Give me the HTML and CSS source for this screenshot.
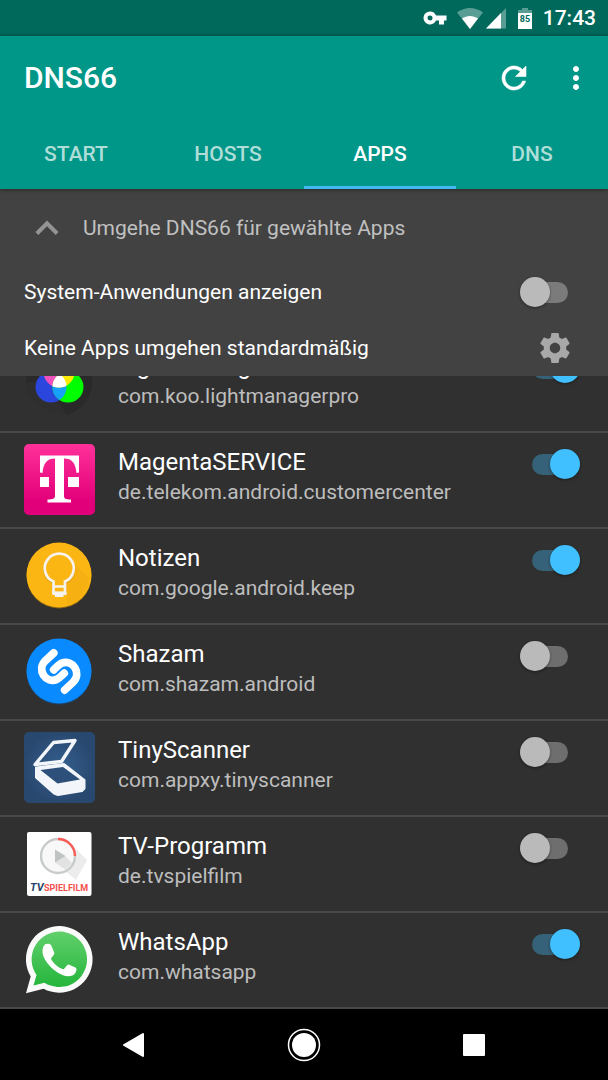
FILE: index.html
```html
<!DOCTYPE html>
<html lang="de" dir="ltr">
  <head>
    <meta charset="utf-8">
    <meta name="viewport" content="width=device-width, initial-scale=1">
    <title>DNS66</title>
    <link rel="stylesheet" href="styles.css">
  </head>
  <body>
    <div class="statusbar">
      <svg class="key" viewBox="0 0 24 14"><path fill="#fff" fill-rule="evenodd" d="M7 0.5a6.5 6.5 0 1 0 6 9H16V13.500h5V9.500h2.500V4.500H13A6.500 6.500 0 0 0 7 .5zM7 4.500a2.500 2.500 0 1 1 0 5 2.500 2.500 0 0 1 0-5z"/></svg>
      <svg class="wifi" viewBox="0 0 26 21"><path fill="#fff" fill-opacity=".35" d="M0 4.500C8-1.500 18-1.500 26 4.500L13 21z"/><path fill="#fff" d="M5 10.500C10 7 16 7 21 10.500L13 21z"/></svg>
      <svg class="signal" viewBox="0 0 20 21"><path fill="#fff" fill-opacity=".35" d="M20 0v20.500H0z"/><path fill="#fff" d="M15 5v15.500H0z"/></svg>
      <svg class="battery" viewBox="0 0 14 21"><path fill="#fff" fill-opacity=".35" d="M4 0h6v2h4v4H0V2h4z"/><path fill="#fff" d="M0 5h14v16H0z"/><text x="7" y="14" text-anchor="middle">85</text></svg>
      <span class="clock">17:43</span>
    </div>

    <header class="header">
      <div class="toolbar">
        <h1>DNS66</h1>
        <button class="action" aria-label="Aktualisieren">
          <svg width="36" height="36" viewBox="0 0 24 24"><path fill="#fff" stroke="#fff" stroke-width=".4" d="M17.650 6.350C16.200 4.900 14.210 4 12 4c-4.420 0-7.990 3.580-7.990 8s3.570 8 7.990 8c3.730 0 6.840-2.550 7.730-6h-2.080c-.82 2.330-3.040 4-5.650 4-3.310 0-6-2.690-6-6s2.690-6 6-6c1.660 0 3.140.69 4.220 1.780L13 11h7V4l-2.350 2.350z"/></svg>
        </button>
        <button class="action" aria-label="Menü">
          <svg width="36" height="36" viewBox="0 0 24 24"><path fill="#fff" d="M12 8c1.100 0 2-.9 2-2s-.9-2-2-2-2 .9-2 2 .9 2 2 2zm0 2c-1.100 0-2 .9-2 2s.9 2 2 2 2-.9 2-2-.9-2-2-2zm0 6c-1.100 0-2 .9-2 2s.9 2 2 2 2-.9 2-2-.9-2-2-2z"/></svg>
        </button>
      </div>
      <nav class="tabs">
        <a href="#start">START</a>
        <a href="#hosts">HOSTS</a>
        <a href="#apps" class="active">APPS</a>
        <a href="#dns">DNS</a>
      </nav>
    </header>

    <section class="panel">
      <button class="panel-title">
        <svg width="36" height="36" viewBox="0 0 24 24"><path fill="#949494" d="M12 7l-7.700 7.700 1.900 1.900L12 10.800l5.800 5.800 1.900-1.900z"/></svg>
        Umgehe DNS66 für gewählte Apps
      </button>
      <div class="option">
        <label for="system">System-Anwendungen anzeigen</label>
        <input type="checkbox" class="switch" id="system">
      </div>
      <div class="option">
        <span>Keine Apps umgehen standardmäßig</span>
        <button class="gear" aria-label="Einstellungen">
          <svg width="36" height="36" viewBox="0 0 24 24"><path fill="#a8a8a8" d="M19.430 12.980c.04-.32.070-.64.070-.98s-.03-.66-.07-.98l2.110-1.650c.19-.15.240-.42.120-.64l-2-3.460c-.12-.22-.39-.3-.61-.22l-2.490 1c-.52-.4-1.080-.73-1.690-.98l-.38-2.650C14.460 2.180 14.250 2 14 2h-4c-.25 0-.46.18-.49.420l-.38 2.650c-.61.250-1.170.590-1.690.980l-2.490-1c-.23-.09-.49 0-.61.220l-2 3.460c-.13.220-.07.490.120.640l2.110 1.650c-.04.320-.07.650-.07.980s.03.660.070.980l-2.110 1.650c-.19.150-.24.420-.12.640l2 3.460c.12.220.390.300.610.220l2.490-1c.52.400 1.080.730 1.690.980l.38 2.650c.03.240.240.420.490.420h4c.25 0 .46-.18.490-.42l.38-2.650c.61-.25 1.170-.59 1.690-.98l2.490 1c.23.090.490 0 .61-.22l2-3.460c.12-.22.070-.49-.12-.64l-2.110-1.650zM12 15.500c-1.930 0-3.500-1.570-3.500-3.500s1.570-3.500 3.500-3.500 3.500 1.570 3.500 3.500-1.570 3.500-3.500 3.500z"/></svg>
        </button>
      </div>
    </section>

    <main class="liste">
      <div class="app">
        <svg class="icon" viewBox="0 0 72 72">
          <defs>
            <clipPath id="rot"><circle cx="35" cy="24" r="15.500"/></clipPath>
            <clipPath id="blau"><circle cx="27" cy="39" r="15.500"/></clipPath>
          </defs>
          <path fill="#292929" d="M2 34a33 33 0 0 1 66 0c0 17-10 27-25 33C22 62 2 54 2 34z"/>
          <path fill="#2e2e2e" d="M2 34h20l21 33C22 65 3 54 2 34z"/>
          <circle fill="#f22" cx="35" cy="24" r="15.500"/>
          <circle fill="#2b46dc" cx="27" cy="39" r="15.500"/>
          <circle fill="#0f0" cx="44" cy="39" r="15.500"/>
          <g clip-path="url(#blau)">
            <circle fill="#f050bc" cx="35" cy="24" r="15.500"/>
            <circle fill="#16a2fa" cx="44" cy="39" r="15.500"/>
          </g>
          <g clip-path="url(#rot)">
            <circle fill="#ffeb00" cx="44" cy="39" r="15.500"/>
            <g clip-path="url(#blau)"><circle fill="#fff" cx="44" cy="39" r="15.500"/></g>
          </g>
        </svg>
        <label class="info" for="light">
          <span class="name">Light Manager Pro</span>
          <span class="paket">com.koo.lightmanagerpro</span>
        </label>
        <input type="checkbox" class="switch" id="light" checked>
      </div>

      <div class="app">
        <svg class="icon" viewBox="0 0 72 72">
          <defs><linearGradient id="magenta" x2="0" y2="1"><stop offset="0" stop-color="#ff3199"/><stop offset=".8" stop-color="#e2007a"/></linearGradient></defs>
          <rect width="71" height="71" rx="5" fill="url(#magenta)"/>
          <path fill="#fff" d="M16 11.500h39V28.500l-2.500.5C51.500 19 48 14.500 40 14.500V52c0 2.500 1.500 3.500 7 3.500v3H23.500v-3c5.500 0 7.500-1 7.500-3.500V14.500C23 14.500 19.500 19 18.500 29L16 28.500zM16 33h9v10h-9zM44 33h11v10H44z"/>
        </svg>
        <label class="info" for="magenta-service">
          <span class="name">MagentaSERVICE</span>
          <span class="paket">de.telekom.android.customercenter</span>
        </label>
        <input type="checkbox" class="switch" id="magenta-service" checked>
      </div>

      <div class="app">
        <svg class="icon" viewBox="0 0 72 72">
          <circle cx="35" cy="36" r="32.500" fill="#8a6510"/>
          <circle cx="35" cy="35" r="32.500" fill="#fbb614"/>
          <path fill="#f7b012" d="M46 19l19 19a32 32 0 0 1-22 28l-1-24z"/>
          <path fill="none" stroke="#c98a0c" stroke-width="3" opacity=".6" d="M29.500 53.500V42.500a14.500 14.500 0 1 1 11.500 0V53.500z"/>
          <path fill="#fbb614" stroke="#f6f3ef" stroke-width="2.700" d="M29.500 53V41.500a14.500 14.500 0 1 1 11.500 0V53zM29.500 46.500H41"/>
          <path fill="#f6f3ef" d="M28.500 51.500h14V55H39.500v2h-8.500v-2h-2.500z"/>
        </svg>
        <label class="info" for="notizen">
          <span class="name">Notizen</span>
          <span class="paket">com.google.android.keep</span>
        </label>
        <input type="checkbox" class="switch" id="notizen" checked>
      </div>

      <div class="app">
        <svg class="icon" viewBox="0 0 72 72">
          <circle cx="35" cy="36" r="32.500" fill="#174a7d"/>
          <circle cx="35" cy="35" r="32.500" fill="#0a8aff"/>
          <g fill="none" stroke="#fff" stroke-width="7.800" stroke-linecap="round">
            <path d="M29.700 17L21.500 24.500C12 34 22 47.500 32.500 43.500C35.500 42.300 37.500 39.500 40.200 37.200"/>
            <path d="M40.700 54L48.800 46.500C58.500 37 48.500 23 37.800 27.200C35 28.300 32.800 31 29.800 33.800"/>
          </g>
        </svg>
        <label class="info" for="shazam">
          <span class="name">Shazam</span>
          <span class="paket">com.shazam.android</span>
        </label>
        <input type="checkbox" class="switch" id="shazam">
      </div>

      <div class="app">
        <svg class="icon" viewBox="0 0 72 72">
          <defs><radialGradient id="scan"><stop offset="0" stop-color="#34608f"/><stop offset="1" stop-color="#29486f"/></radialGradient></defs>
          <rect width="71" height="71" rx="5" fill="url(#scan)"/>
          <path fill="none" stroke="#f2f5f9" stroke-width="3.400" stroke-linejoin="round" d="M11 32.500L29.500 10.500 51 8.500 37.500 29.500z"/>
          <path fill="#f2f5f9" stroke="#f2f5f9" stroke-width="2" stroke-linejoin="round" d="M12 35.500l28-3.500L60.500 48v8.500L58 59l-24 4-4-1.500L12 45.500z"/>
          <path fill="#2c5079" d="M16.500 38l22.500-3 17 12.500-22.500 4z"/>
        </svg>
        <label class="info" for="scanner">
          <span class="name">TinyScanner</span>
          <span class="paket">com.appxy.tinyscanner</span>
        </label>
        <input type="checkbox" class="switch" id="scanner">
      </div>

      <div class="app">
        <svg class="icon" viewBox="0 0 72 72">
          <rect x="3" y="4" width="64.500" height="64" rx="2" fill="#fff"/>
          <path fill="#ececec" d="M47 16l16 16L52 52 31 34.500z"/>
          <circle cx="34" cy="28" r="17" fill="#f8f8f8" stroke="#c8cbcb" stroke-width="2.400"/>
          <path fill="#e2e2e2" d="M41 28l7 7-6 7-11-7.500z"/>
          <path fill="none" stroke="#fb5a55" stroke-width="2.400" d="M34 11a17 17 0 0 1 17 17"/>
          <path fill="#bfc3c3" d="M31 21.500L41.500 28 31 34.500z"/>
          <text class="tv" x="6" y="63">TV</text>
          <text class="spielfilm" x="20" y="63">SPIELFILM</text>
        </svg>
        <label class="info" for="tv">
          <span class="name">TV-Programm</span>
          <span class="paket">de.tvspielfilm</span>
        </label>
        <input type="checkbox" class="switch" id="tv">
      </div>

      <div class="app">
        <svg class="icon" viewBox="0 0 72 72">
          <defs><linearGradient id="wa" x2="0" y2="1"><stop offset="0" stop-color="#61d06b"/><stop offset="1" stop-color="#25b53c"/></linearGradient></defs>
          <path fill="#fafafa" d="M2 69.300L6.700 52.500A33.300 33.300 0 1 1 19.500 64.700z"/>
          <path fill="url(#wa)" d="M9.500 61.500l3-10.500A27.700 27.700 0 1 1 20.500 58.700z"/>
          <path fill="#fff" d="M19.500 22.500c1.200-2.500 3-3 6-2.500 1 .2 1.500 1 2 2l2.700 6.500c.3 1 0 1.800-.6 2.500l-2.100 2.800c-.5.700-.5 1.200-.1 1.900 2.800 4.400 6.300 7.400 11 9.300.8.300 1.400.2 2-.4l2.700-3.400c.6-.8 1.300-.9 2.200-.5l6 2.900c1 .5 1.300.9 1.200 2-.3 4.500-4 7-8.500 6.700C33 51.500 19 37.500 18.500 28c0-2 .2-3.800 1-5.500z"/>
        </svg>
        <label class="info" for="whatsapp">
          <span class="name">WhatsApp</span>
          <span class="paket">com.whatsapp</span>
        </label>
        <input type="checkbox" class="switch" id="whatsapp" checked>
      </div>
    </main>

    <footer class="navbar">
      <button aria-label="Zurück"><svg width="36" height="36" viewBox="0 0 36 36"><path fill="#fff" stroke="#fff" stroke-width="2" stroke-linejoin="round" d="M8 18L27 7v22z"/></svg></button>
      <button aria-label="Startseite"><svg width="36" height="36" viewBox="0 0 36 36"><circle cx="18" cy="18" r="15.500" fill="none" stroke="#fff" stroke-width="1.500"/><circle cx="18" cy="18" r="12" fill="#fff"/></svg></button>
      <button aria-label="Übersicht"><svg width="36" height="36" viewBox="0 0 36 36"><rect x="7" y="7" width="22" height="22" rx="1" fill="#fff"/></svg></button>
    </footer>
  </body>
</html>
```
FILE: styles.css
```css
* {
  box-sizing: border-box;
  margin: 0;
}

body {
  display: flex;
  flex-direction: column;
  height: 100vh;
  background: #303030;
  color: #fff;
  font-family: Roboto, sans-serif;
  font-size: 21px;
  line-height: 30px;
}

button {
  display: flex;
  align-items: center;
  justify-content: center;
  padding: 0;
  border: 0;
  background: none;
  color: inherit;
  font: inherit;
}

svg {
  display: block;
  flex: none;
}

.statusbar {
  display: flex;
  flex: none;
  align-items: center;
  justify-content: flex-end;
  height: 36px;
  padding-right: 12px;
  background: linear-gradient(#00695c 32px, #005f53);
}

.key {
  width: 24px;
  height: 14px;
  margin-right: 10px;
}

.wifi {
  width: 26px;
  height: 21px;
  margin-right: 3px;
}

.signal {
  width: 20px;
  height: 21px;
  margin-right: 12px;
}

.battery {
  width: 14px;
  height: 21px;
  margin-right: 11px;
}

.battery text {
  fill: #00695c;
  font-size: 9px;
  font-weight: bold;
}

.clock {
  font-weight: 500;
}

.header {
  flex: none;
  position: relative;
  background: #009688;
  box-shadow: 0 1px 4px rgba(0, 0, 0, .4);
}

.toolbar {
  display: flex;
  align-items: center;
  height: 84px;
  padding: 0 14px 0 24px;
}

.toolbar h1 {
  flex: 1;
  font-size: 30px;
  font-weight: 500;
}

.action {
  width: 36px;
  height: 48px;
  margin-left: 26px;
}

.tabs {
  display: flex;
}

.tabs a {
  flex: 1;
  height: 69px;
  padding-top: 3px;
  border-bottom: 3px solid transparent;
  color: rgba(255, 255, 255, .7);
  font-weight: 500;
  line-height: 63px;
  text-align: center;
  text-decoration: none;
}

.tabs .active {
  border-color: #40b8f4;
  color: #fff;
}

.panel {
  flex: none;
  background: #424242;
}

.panel-title {
  justify-content: flex-start;
  gap: 18px;
  width: 100%;
  height: 75px;
  padding: 3px 29px 0;
  color: #c0c0c0;
}

.option {
  display: flex;
  align-items: center;
  justify-content: space-between;
  height: 56px;
  padding: 0 28px 0 24px;
}

.gear {
  width: 50px;
  height: 56px;
}

/* switch */
.switch {
  display: grid;
  flex: none;
  align-items: center;
  appearance: none;
  width: 60px;
  height: 30px;
}

.switch::before,
.switch::after {
  content: "";
  grid-area: 1 / 1;
}

.switch::before {
  justify-self: center;
  width: 36px;
  height: 21px;
  border-radius: 11px;
  background: rgba(255, 255, 255, .3);
}

.switch::after {
  width: 30px;
  height: 30px;
  border-radius: 50%;
  background: #bababa;
  box-shadow: 0 1px 3px rgba(0, 0, 0, .4);
}

.switch:checked::before {
  background: rgba(64, 192, 255, .35);
}

.switch:checked::after {
  justify-self: end;
  background: #40c0ff;
}

/* the list is scrolled to its end */
.liste {
  display: flex;
  flex: 1;
  flex-direction: column;
  justify-content: flex-end;
  min-height: 0;
  overflow: hidden;
}

.app {
  display: flex;
  flex: none;
  align-items: center;
  height: 96px;
  padding: 0 28px 0 24px;
  border-bottom: 2px solid #484848;
}

.app .switch {
  align-self: flex-start;
  margin-top: 16px;
}

.icon {
  width: 72px;
  height: 72px;
}

.info {
  flex: 1;
  margin-left: 22px;
  padding-bottom: 7px;
}

.info span {
  display: block;
}

.name {
  font-size: 24px;
}

.paket {
  color: #bdbdbd;
}

.tv,
.spielfilm {
  font-size: 9px;
  font-weight: bold;
}

.tv {
  fill: #27436b;
  font-size: 11px;
  font-style: italic;
}

.spielfilm {
  fill: #f4504c;
}

.navbar {
  display: flex;
  flex: none;
  height: 71px;
  padding: 0 8%;
  background: #000;
}

.navbar button {
  flex: 1;
}
```
